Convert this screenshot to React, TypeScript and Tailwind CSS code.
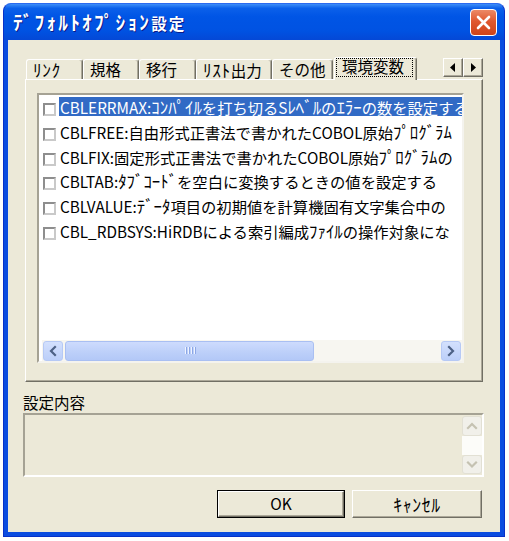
import React from "react";

const FONT = { fontFamily: '"Noto Sans CJK JP", "Noto Sans", sans-serif' };

const rows = [
  "CBLERRMAX:ｺﾝﾊﾟｲﾙを打ち切るSﾚﾍﾞﾙのｴﾗｰの数を設定する",
  "CBLFREE:自由形式正書法で書かれたCOBOL原始ﾌﾟﾛｸﾞﾗﾑ",
  "CBLFIX:固定形式正書法で書かれたCOBOL原始ﾌﾟﾛｸﾞﾗﾑの",
  "CBLTAB:ﾀﾌﾞｺｰﾄﾞを空白に変換するときの値を設定する",
  "CBLVALUE:ﾃﾞｰﾀ項目の初期値を計算機固有文字集合中の",
  "CBL_RDBSYS:HiRDBによる索引編成ﾌｧｲﾙの操作対象にな",
];

// Render half-width katakana runs slightly larger so they read like the MS UI Gothic bitmap glyphs.
function HW({ text, cls = "text-[1.1em]" }: { text: string; cls?: string }) {
  const parts = text.split(/([\uFF61-\uFF9F]+)/);
  return (
    <>
      {parts.map((p, i) =>
        /[\uFF61-\uFF9F]/.test(p) ? (
          <span key={i} className={cls}>
            {p}
          </span>
        ) : (
          <React.Fragment key={i}>{p}</React.Fragment>
        )
      )}
    </>
  );
}

function Chevron({ dir, color, w = 20, h = 20 }: { dir: "l" | "r" | "u" | "d"; color: string; w?: number; h?: number }) {
  const cx = w / 2;
  const cy = h / 2;
  let pts = "";
  if (dir === "l") pts = `${cx + 2},${cy - 4} ${cx - 2},${cy} ${cx + 2},${cy + 4}`;
  if (dir === "r") pts = `${cx - 2},${cy - 4} ${cx + 2},${cy} ${cx - 2},${cy + 4}`;
  if (dir === "u") pts = `${cx - 4},${cy + 2} ${cx},${cy - 2} ${cx + 4},${cy + 2}`;
  if (dir === "d") pts = `${cx - 4},${cy - 2} ${cx},${cy + 2} ${cx + 4},${cy - 2}`;
  return (
    <svg width={w} height={h} className="block">
      <polyline points={pts} fill="none" stroke={color} strokeWidth="2.2" strokeLinecap="square" />
    </svg>
  );
}

function Tab({ label, w, first }: { label: string; w: string; first?: boolean }) {
  return (
    <div
      className={`${w} ${first ? "ml-[1px]" : ""} h-[20px] shrink-0 rounded-t-[3px] border-l border-t border-r border-l-white border-t-white border-r-[#716f64] shadow-[inset_-1px_0_0_#aca899] pl-[6px] text-[15.5px] leading-[19px] text-black whitespace-nowrap`}
    >
      <HW text={label} cls="text-[1.12em] tracking-[0.6px]" />
    </div>
  );
}

export default function App() {
  return (
    <div className="w-[509px] h-[541px] bg-white overflow-hidden" style={FONT}>
      <div className="ml-[3px] mt-[3px] w-[502px] h-[534px] flex flex-col rounded-t-[8px] overflow-hidden bg-[#0a4ade] border border-[#0831c8] border-t-[#2a6af0]">
        {/* Title bar */}
        <div className="h-[36px] shrink-0 flex items-center pl-[9px] pr-[7px] bg-[linear-gradient(180deg,#3d8ef8_0%,#0b60ea_12%,#0055e5_35%,#0052e2_75%,#0448d6_100%)]">
          <span className="text-white font-bold text-[15.5px] leading-[20px] tracking-[2.2px] [text-shadow:1px_1px_0_#0a1a8a] mt-[1px] whitespace-nowrap">
            <HW text="ﾃﾞﾌｫﾙﾄｵﾌﾟｼｮﾝ設定" cls="text-[1.25em]" />
          </span>
          <div className="ml-auto w-[27px] h-[27px] rounded-[4px] border border-white bg-[linear-gradient(180deg,#ec8a66_0%,#e0582f_45%,#cf4419_100%)] flex items-center justify-center mt-[1px]">
            <svg width="17" height="17" className="block">
              <line x1="3" y1="3" x2="14" y2="14" stroke="white" strokeWidth="2.6" strokeLinecap="round" />
              <line x1="14" y1="3" x2="3" y2="14" stroke="white" strokeWidth="2.6" strokeLinecap="round" />
            </svg>
          </div>
        </div>

        {/* Body */}
        <div className="flex-1 px-[4px] pb-[4px] bg-[#0b4ce0]">
          <div className="h-full bg-[#ece9d8] flex flex-col px-[15px] pt-[17px]">
            {/* Tabs row */}
            <div className="mx-[2px] h-[22px] flex items-end shrink-0">
              <Tab label="ﾘﾝｸ" w="w-[57px]" first />
              <Tab label="規格" w="w-[56px]" />
              <Tab label="移行" w="w-[57px]" />
              <Tab label="ﾘｽﾄ出力" w="w-[76px]" />
              <Tab label="その他" w="w-[61px]" />
              <div className="relative z-10 ml-[1px] mb-[-1px] w-[83px] h-[23px] shrink-0 rounded-t-[3px] bg-[#ece9d8] border-l border-t border-r border-l-white border-t-white border-r-[#716f64] shadow-[inset_-1px_0_0_#aca899] pl-[7px] text-[15.5px] leading-[17px] text-black whitespace-nowrap">
                環境変数
                <div className="absolute left-[1px] right-[3px] top-0 bottom-[3px] border border-dotted border-black" />
              </div>
              <div className="ml-auto self-start mt-[1px] flex">
                <div className="w-[20px] h-[19px] bg-[#ece9d8] border border-t-white border-l-white border-r-[#716f64] border-b-[#716f64] shadow-[inset_-1px_-1px_0_#aca899] flex items-center justify-center">
                  <svg width="6" height="9" className="block"><polygon points="5,0 0,4.5 5,9" fill="black" /></svg>
                </div>
                <div className="w-[20px] h-[19px] bg-[#ece9d8] border border-t-white border-l-white border-r-[#716f64] border-b-[#716f64] shadow-[inset_-1px_-1px_0_#aca899] flex items-center justify-center">
                  <svg width="6" height="9" className="block"><polygon points="1,0 6,4.5 1,9" fill="black" /></svg>
                </div>
              </div>
            </div>

            {/* Panel */}
            <div className="mx-[2px] h-[303px] shrink-0 border border-t-white border-l-white border-r-[#716f64] border-b-[#716f64] shadow-[inset_-1px_-1px_0_#aca899] pl-[11px] pt-[13px]">
              <div className="w-[427px] h-[270px] bg-white border-2 border-t-[#a5a294] border-l-[#a5a294] border-r-[#f4f3ee] border-b-[#f4f3ee] flex flex-col overflow-hidden">
                <div className="flex-1 pl-[4px] overflow-hidden">
                  {rows.map((r, i) => (
                    <div key={i} className="h-[24.8px] flex items-start">
                      <div className="mt-[8px] w-[13px] h-[13px] shrink-0 bg-white border-2 border-t-[#8e8e8e] border-l-[#8e8e8e] border-r-[#c9c9c9] border-b-[#c9c9c9]" />
                      <div
                        className={`ml-[3px] mt-[2px] h-[19px] shrink-0 pl-[1px] pr-[4px] text-[15.3px] leading-[19px] whitespace-nowrap ${
                          i === 0 ? "bg-[#316ac5] text-white" : "text-black"
                        }`}
                      >
                        <HW text={r} />
                      </div>
                    </div>
                  ))}
                </div>
                {/* Horizontal scrollbar */}
                <div className="h-[21px] shrink-0 ml-[3px] w-[420px] bg-[#f7f6f1] flex items-center pl-[1px] pr-[1px]">
                  <div className="w-[20px] h-[20px] rounded-[3px] border border-[#b6c9f5] bg-[linear-gradient(180deg,#d3e0fd_0%,#bccff9_100%)] flex items-center justify-center">
                    <Chevron dir="l" color="#4d6185" w={18} h={18} />
                  </div>
                  <div className="ml-[2px] w-[249px] h-[20px] rounded-[3px] border border-[#a9bff2] bg-[linear-gradient(180deg,#cddbfd_0%,#bccff9_60%,#b3c8f7_100%)] flex items-center justify-center gap-[1px]">
                    <div className="w-[1px] h-[7px] bg-[#eef3ff] shadow-[1px_0_0_#8ca7e6]" />
                    <div className="ml-[1px] w-[1px] h-[7px] bg-[#eef3ff] shadow-[1px_0_0_#8ca7e6]" />
                    <div className="ml-[1px] w-[1px] h-[7px] bg-[#eef3ff] shadow-[1px_0_0_#8ca7e6]" />
                    <div className="ml-[1px] w-[1px] h-[7px] bg-[#eef3ff] shadow-[1px_0_0_#8ca7e6]" />
                  </div>
                  <div className="flex-1" />
                  <div className="w-[20px] h-[20px] rounded-[3px] border border-[#b6c9f5] bg-[linear-gradient(180deg,#d3e0fd_0%,#bccff9_100%)] flex items-center justify-center">
                    <Chevron dir="r" color="#4d6185" w={18} h={18} />
                  </div>
                </div>
              </div>
            </div>

            {/* Label */}
            <div className="mt-[10px] h-[20px] leading-[20px] text-[15.5px] text-black shrink-0">設定内容</div>

            {/* Text box */}
            <div className="mt-[1px] mr-[1px] h-[64px] shrink-0 bg-[#ece9d8] border-2 border-t-[#a5a294] border-l-[#a5a294] border-r-white border-b-white flex justify-end">
              <div className="w-[20px] flex flex-col pt-[1px] pb-[1px]">
                <div className="h-[20px] rounded-[3px] border border-[#e2e0d4] bg-[#f1f0ea] flex items-center justify-center">
                  <Chevron dir="u" color="#c5c2b2" w={18} h={18} />
                </div>
                <div className="flex-1 bg-[#fcfcf9]" />
                <div className="h-[19px] rounded-[3px] border border-[#e2e0d4] bg-[#f1f0ea] flex items-center justify-center">
                  <Chevron dir="d" color="#c5c2b2" w={18} h={17} />
                </div>
              </div>
            </div>

            {/* Buttons */}
            <div className="mt-[13px] mr-[3px] flex justify-end shrink-0">
              <div className="w-[128px] h-[28px] border border-black">
                <div className="w-full h-full border border-t-white border-l-white border-r-[#716f64] border-b-[#716f64] shadow-[inset_-1px_-1px_0_#aca899] flex items-center justify-center text-[15.5px] text-black">
                  OK
                </div>
              </div>
              <div className="ml-[7px] w-[130px] h-[28px] border border-t-white border-l-white border-r-[#716f64] border-b-[#716f64] shadow-[inset_-1px_-1px_0_#aca899] flex items-center justify-center text-[15.5px] leading-[20px] text-black">
                <span className="tracking-[0.6px]">
                  <HW text="ｷｬﾝｾﾙ" cls="text-[1.15em]" />
                </span>
              </div>
            </div>
          </div>
        </div>
      </div>
    </div>
  );
}
